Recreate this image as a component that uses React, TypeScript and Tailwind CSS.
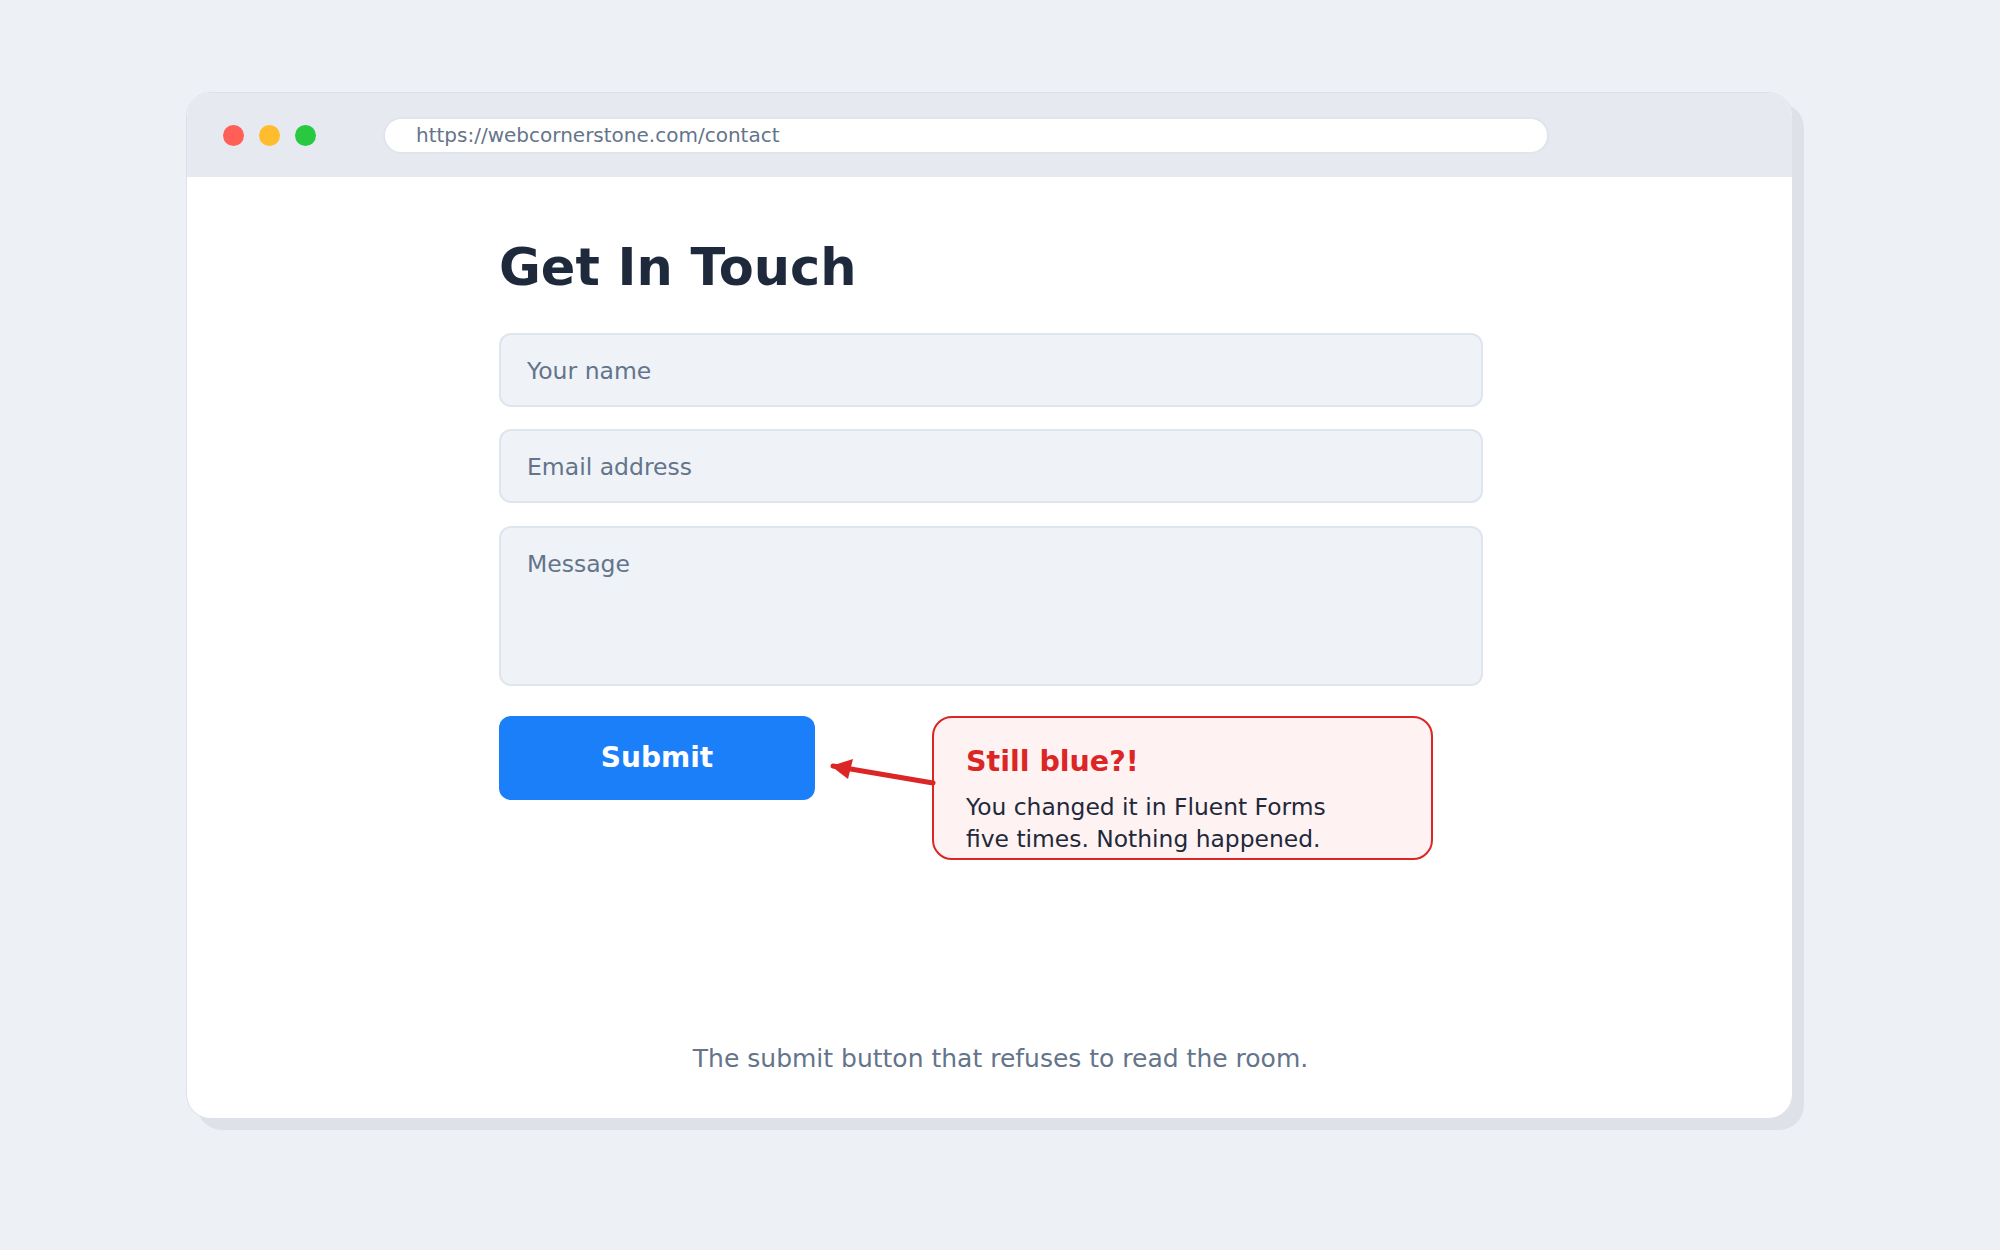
import React from 'react';

function TrafficLights() {
  return (
    <div className="flex items-center gap-[15px]">
      <span className="block h-[21px] w-[21px] rounded-full bg-[#ff5f57]" />
      <span className="block h-[21px] w-[21px] rounded-full bg-[#febc2e]" />
      <span className="block h-[21px] w-[21px] rounded-full bg-[#28c840]" />
    </div>
  );
}

function Arrow() {
  return (
    <svg
      className="pointer-events-none absolute left-0 top-0"
      width="460"
      height="100"
      viewBox="0 0 460 100"
      fill="none"
    >
      <line x1="434" y1="67" x2="334" y2="50" stroke="#dc2626" strokeWidth="5" strokeLinecap="round" />
      <polygon points="332,50 354,43 349,63" fill="#dc2626" />
    </svg>
  );
}

export default function App() {
  const field =
    'block w-full rounded-[12px] border-2 border-[#dfe5ed] bg-[#eff3f8] px-[26px] text-[23.5px] text-[#1e293b] outline-none placeholder:text-[#64748b]';

  return (
    <div className="min-h-[1250px] w-full bg-[#edf0f5] pl-[186px] pt-[92px] font-['DejaVu_Sans',sans-serif]">
      <div className="flex h-[1027px] w-[1607px] flex-col overflow-hidden rounded-[25px] border border-[#dce2e9] bg-white shadow-[11px_11px_0_#dee2e8]">
        {/* browser chrome */}
        <header className="flex h-[84px] shrink-0 items-center bg-[#e6eaf0] pl-[36px]">
          <TrafficLights />
          <div className="ml-[67px] flex h-[37px] w-[1166px] items-center rounded-full border-2 border-[#dfe5ed] bg-white pl-[31px] text-[20px] text-[#64748b]">
            https://webcornerstone.com/contact
          </div>
        </header>

        {/* page */}
        <main className="flex flex-1 flex-col pl-[312px] pt-[66px]">
          <h1 className="h-[50px] text-[51px] font-bold leading-[50px] text-[#1e293b]">Get In Touch</h1>

          <form className="mt-[40px] w-[984px]" onSubmit={e => e.preventDefault()}>
            <input className={`${field} h-[74px] pt-[2px]`} placeholder="Your name" />
            <input className={`${field} mt-[22px] h-[74px] pt-[2px]`} placeholder="Email address" />
            <textarea
              className={`${field} mt-[23px] h-[160px] resize-none pt-[23px] leading-[1.164]`}
              placeholder="Message"
            />

            <div className="relative mt-[30px] flex items-start">
              <button
                type="submit"
                className="h-[84px] w-[316px] rounded-[12px] bg-[#1c7ffa] text-[28px] font-bold text-white"
              >
                Submit
              </button>

              <div className="ml-[117px] h-[144px] w-[501px] rounded-[20px] border-2 border-[#dc2626] bg-[#fef2f2] pl-[32px] pt-[28px]">
                <div className="text-[28.5px] font-bold leading-[32px] text-[#dc2626]">Still blue?!</div>
                <p className="mt-[13px] text-[23.4px] leading-[32px] text-[#1e293b]">
                  You changed it in Fluent Forms
                  <br />
                  five times. Nothing happened.
                </p>
              </div>

              <Arrow />
            </div>
          </form>

          <p className="mb-[44px] mt-auto pr-[290px] text-center text-[25px] leading-[30px] text-[#64748b]">
            The submit button that refuses to read the room.
          </p>
        </main>
      </div>
    </div>
  );
}
